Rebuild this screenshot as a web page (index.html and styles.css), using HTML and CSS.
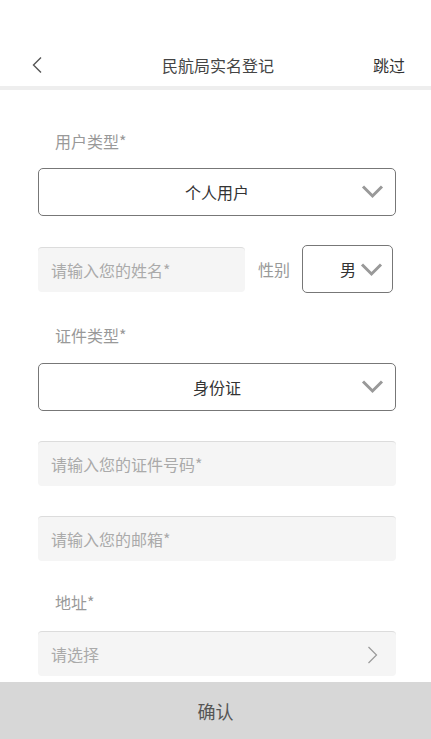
FILE: index.html
```html
<!DOCTYPE html>
<html lang="zh-CN">
<head>
<meta charset="utf-8">
<title>民航局实名登记</title>
<link rel="stylesheet" href="styles.css">
</head>
<body>
<div class="page">
  <header class="header">
    <span class="back">
      <svg width="12" height="18" viewBox="0 0 12 18"><polyline points="10,1.5 2.5,9 10,16.5" fill="none" stroke="#555" stroke-width="1.4"/></svg>
    </span>
    <span class="title">民航局实名登记</span>
    <span class="skip">跳过</span>
  </header>
  <main class="form">
    <div class="label label-first">用户类型*</div>
    <div class="select">
      <span class="select-text">个人用户</span>
      <svg class="chev" width="23" height="15" viewBox="0 0 23 15"><polyline points="2,2.5 11.5,12 21,2.5" fill="none" stroke="#999" stroke-width="3"/></svg>
    </div>
    <div class="row">
      <div class="input name">请输入您的姓名*</div>
      <span class="gender-label">性别</span>
      <div class="gender">
        <span>男</span>
        <svg width="23" height="15" viewBox="0 0 23 15"><polyline points="2,2.5 11.5,12 21,2.5" fill="none" stroke="#999" stroke-width="3"/></svg>
      </div>
    </div>
    <div class="label label-second">证件类型*</div>
    <div class="select">
      <span class="select-text">身份证</span>
      <svg class="chev" width="23" height="15" viewBox="0 0 23 15"><polyline points="2,2.5 11.5,12 21,2.5" fill="none" stroke="#999" stroke-width="3"/></svg>
    </div>
    <div class="input input-gap">请输入您的证件号码*</div>
    <div class="input input-gap">请输入您的邮箱*</div>
    <div class="label label-third">地址*</div>
    <div class="input picker">
      <span>请选择</span>
      <svg width="11" height="18" viewBox="0 0 11 18"><polyline points="1.5,1 9.5,9 1.5,17" fill="none" stroke="#999" stroke-width="1.2"/></svg>
    </div>
  </main>
  <footer class="confirm">确认</footer>
</div>
</body>
</html>
```
FILE: styles.css
```css
* { box-sizing: border-box; }
html, body { margin: 0; padding: 0; background: #fff; }
body {
  font-family: "Noto Sans CJK SC", "Noto Sans", sans-serif;
  font-size: 16px;
}
.page {
  display: flex;
  flex-direction: column;
  height: 739px;
  overflow: hidden;
}
.header {
  position: relative;
  height: 90px;
  padding-top: 44px;
  display: flex;
  align-items: flex-start;
  justify-content: space-between;
  border-bottom: 4px solid #eeeeee;
}
.header > span { height: 42px; display: flex; align-items: center; }
.back { margin-left: 31px; width: 40px; }
.title { color: #444; font-size: 16px; }
.skip { color: #333; font-size: 16px; margin-right: 26px; width: 40px; justify-content: flex-end; }
.form {
  flex: 1;
  padding: 0 35px 0 38px;
}
.label {
  color: #999;
  font-size: 16px;
  line-height: 20px;
  height: 20px;
  padding-left: 17px;
}
.label-first { margin-top: 41px; margin-bottom: 17px; }
.label-second { margin-top: 32px; margin-bottom: 18px; }
.label-third { margin-top: 31px; margin-bottom: 19px; }
.select {
  position: relative;
  height: 48px;
  border: 1px solid #777;
  border-radius: 5px;
  display: flex;
  align-items: center;
  justify-content: center;
}
.select-text { color: #333; font-size: 16px; }
.chev { position: absolute; right: 11px; top: 15px; }
.row {
  display: flex;
  align-items: center;
  margin-top: 29px;
  height: 48px;
  margin-right: 3px;
}
.input {
  height: 45px;
  background: #f5f5f5;
  border-top: 1px solid #dcdcdc;
  border-radius: 4px;
  color: #aaa;
  font-size: 16px;
  display: flex;
  align-items: center;
  padding-left: 13px;
}
.name { width: 207px; }
.gender-label { color: #999; margin-left: 13px; font-size: 16px; }
.gender {
  margin-left: auto;
  width: 91px;
  height: 48px;
  border: 1px solid #777;
  border-radius: 5px;
  display: flex;
  align-items: center;
  justify-content: flex-end;
  gap: 4px;
  padding-right: 9px;
  color: #333;
  font-size: 16px;
}
.input-gap { margin-top: 30px; }
.picker { justify-content: space-between; padding-right: 18px; }
.picker svg { margin-top: 1px; }
.confirm {
  height: 57px;
  background: #d7d7d7;
  color: #555;
  font-size: 18px;
  display: flex;
  align-items: center;
  justify-content: center;
}
```
